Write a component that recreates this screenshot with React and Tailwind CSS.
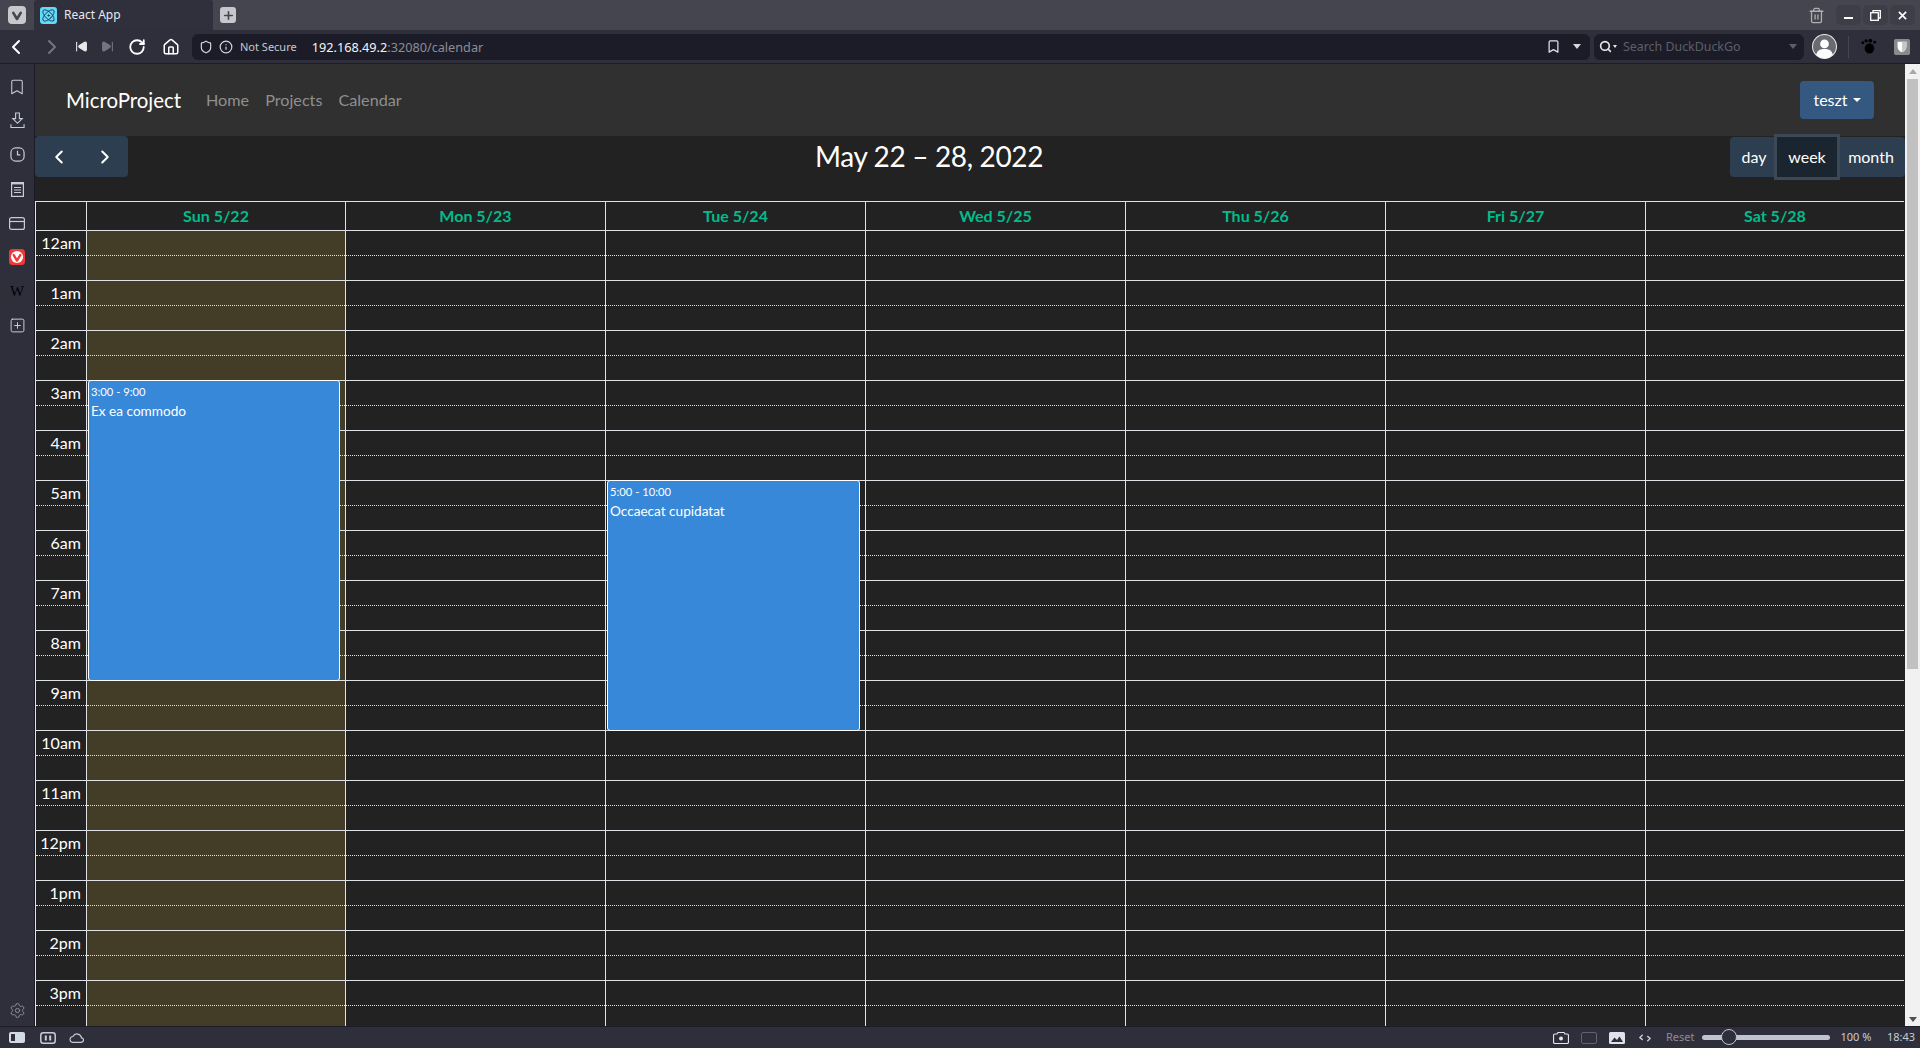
import React from 'react';
import { Atom, Plus, ChevronLeft, ChevronRight, SkipBack, SkipForward, RotateCw, Home, Shield, Info, Bookmark, Search, Trash2, Settings, SquarePlus } from 'lucide-react';

const days = ['Sun 5/22', 'Mon 5/23', 'Tue 5/24', 'Wed 5/25', 'Thu 5/26', 'Fri 5/27', 'Sat 5/28'];
const hours = ['12am', '1am', '2am', '3am', '4am', '5am', '6am', '7am', '8am', '9am', '10am', '11am', '12pm', '1pm', '2pm', '3pm'];

function VivaldiMark({ box, ring, mark }) {
  return (
    <svg viewBox="0 0 18 18" className="w-full h-full">
      <rect width="18" height="18" rx="4" fill={box} />
      <circle cx="9" cy="9" r="6.800" fill={ring} />
      <path d="M5.300 6.800 L9 13 L12.700 6.800" fill="none" stroke={mark} strokeWidth="2.600" strokeLinecap="round" strokeLinejoin="round" />
    </svg>
  );
}

function WindowButton({ children }) {
  return <div className="w-[25px] h-[20px] rounded-[5px] bg-[#3e3e48] flex items-center justify-center">{children}</div>;
}

function TabBar() {
  return (
    <div className="h-[30px] bg-[#45454f] flex items-stretch text-[#e8e8ec]">
      <div className="w-[34px] flex items-center justify-center">
        <div className="w-[18px] h-[18px]"><VivaldiMark box="#c8c8cc" ring="#c8c8cc" mark="#45454f" /></div>
      </div>
      <div className="w-[179px] bg-[#2f303c] rounded-t-[3px] flex items-center pl-[6px] text-[12px] font-['Noto_Sans',sans-serif]">
        <div className="w-[17px] h-[17px] bg-[#61dafb] rounded-[3px] flex items-center justify-center">
          <Atom size={15} color="#1f2a44" strokeWidth={1.500} />
        </div>
        <span className="ml-[7px]">React App</span>
      </div>
      <div className="ml-[7px] flex items-center">
        <div className="w-[16px] h-[16px] bg-[#c8c8cc] rounded-[3px] flex items-center justify-center">
          <Plus size={13} color="#45454f" strokeWidth={3} />
        </div>
      </div>
      <div className="ml-auto flex items-center gap-[2px] pr-[5px]">
        <Trash2 size={17} color="#b0b0b4" strokeWidth={1.800} className="mr-[9px]" />
        <WindowButton><div className="w-[9px] h-[2px] mt-[5px] bg-white" /></WindowButton>
        <WindowButton>
          <svg viewBox="0 0 11 11" className="w-[11px] h-[11px]" fill="none" stroke="#fff" strokeWidth="1.300">
            <rect x="0.700" y="2.700" width="7.600" height="7.600" />
            <path d="M3 2.500V0.700H10.300V8H8.500" />
          </svg>
        </WindowButton>
        <WindowButton>
          <svg viewBox="0 0 10 10" className="w-[9px] h-[9px]" stroke="#fff" strokeWidth="1.800"><path d="M1 1 9 9M9 1 1 9" /></svg>
        </WindowButton>
      </div>
    </div>
  );
}

function AddressBar() {
  return (
    <div className="h-[34px] bg-[#2e2f3b] border-b border-[#1c1c26] flex items-center text-white font-['Noto_Sans',sans-serif]">
      <ChevronLeft size={24} strokeWidth={2} className="ml-[4px]" />
      <ChevronRight size={24} strokeWidth={2} color="#75757f" className="ml-[12px]" />
      <SkipBack size={13} fill="#e8e8ec" strokeWidth={2} className="ml-[11px] text-[#e8e8ec]" />
      <SkipForward size={13} fill="#75757f" strokeWidth={2} color="#75757f" className="ml-[13px]" />
      <RotateCw size={18} strokeWidth={2.400} className="ml-[14px]" />
      <Home size={18} strokeWidth={2} className="ml-[16px]" />
      <div className="ml-[12px] w-[1398px] h-[26px] bg-[#1c1c28] rounded-[6px] flex items-center pl-[7px] pr-[9px]">
        <Shield size={14} color="#d8d8dc" />
        <Info size={14} color="#d8d8dc" className="ml-[6px]" />
        <span className="ml-[7px] pt-[2px] text-[11px] text-[#c8c8cc]">Not Secure</span>
        <span className="ml-[15px] pt-[2px] text-[12.700px] text-[#f4f4f6]">192.168.49.2<span className="text-[#8c8c96]">:32080/calendar</span></span>
        <Bookmark size={15} color="#e0e0e4" className="ml-auto mr-[12px]" />
        <div className="w-0 h-0 border-x-[4px] border-x-transparent border-t-[5px] border-t-[#d8d8dc]" />
      </div>
      <div className="ml-[4px] w-[210px] h-[26px] bg-[#1c1c28] rounded-[6px] flex items-center pl-[5px] pr-[7px]">
        <Search size={13} color="#e8e8ec" strokeWidth={3} />
        <div className="w-0 h-0 ml-[1px] border-x-[2.500px] border-x-transparent border-t-[3px] border-t-[#e8e8ec]" />
        <span className="ml-[6px] pt-[2px] text-[12.400px] text-[#5e5e68]">Search DuckDuckGo</span>
        <div className="ml-auto w-0 h-0 border-x-[4px] border-x-transparent border-t-[5px] border-t-[#5e5e68]" />
      </div>
      <svg viewBox="0 0 24 24" className="ml-[8px] w-[25px] h-[25px]">
        <circle cx="12" cy="12" r="11.500" fill="#6a6a70" stroke="#e8e8ec" strokeWidth="1" />
        <circle cx="12" cy="9.500" r="4.200" fill="#fff" />
        <path d="M4 20c1-4.500 4.500-5.500 8-5.500s7 1 8 5.500A11 11 0 0 1 4 20z" fill="#fff" />
      </svg>
      <div className="ml-[11px] w-px h-[22px] bg-[#45454f]" />
      <svg viewBox="0 0 18 18" className="ml-[11px] w-[17px] h-[17px]">
        <ellipse cx="10" cy="11" rx="5" ry="5.500" fill="#000" />
        <circle cx="3" cy="5" r="1.500" fill="#000" />
        <circle cx="6.500" cy="3" r="1.800" fill="#000" />
        <circle cx="11" cy="2.800" r="2" fill="#000" />
        <circle cx="15.500" cy="4.500" r="1.500" fill="#000" />
      </svg>
      <svg viewBox="0 0 18 18" className="ml-[17px] w-[16px] h-[16px]">
        <rect width="18" height="18" rx="2" fill="#8a8a8a" />
        <path d="M4 3h10v6c0 3-2.500 5-5 6-2.500-1-5-3-5-6z" fill="#fff" />
        <path d="M9 3h5v6c0 3-2.500 5-5 6z" fill="#c8c8c8" />
      </svg>
    </div>
  );
}

function SideItem({ children }) {
  return <div className="h-[34.200px] pt-[14px] flex justify-center shrink-0"><div className="h-[17px] flex items-center">{children}</div></div>;
}

function SideBar() {
  const stroke = '#c8ccd4';
  return (
    <div className="w-[35px] shrink-0 bg-[#2e2f3b] border-r border-[#1c1c26] flex flex-col items-center">
      <SideItem><Bookmark size={18} strokeWidth={1.400} color={stroke} /></SideItem>
      <SideItem>
        <svg viewBox="0 0 16 18" className="w-[15px] h-[17px]" fill="none" stroke={stroke} strokeWidth="1.200">
          <path d="M6 1h4v6h3l-5 5-5-5h3z" />
          <path d="M1 13v3.500h14V13" />
        </svg>
      </SideItem>
      <SideItem>
        <svg viewBox="0 0 16 16" className="w-[15px] h-[15px]" fill="none" stroke={stroke} strokeWidth="1.300">
          <rect x="1" y="1" width="14" height="14" rx="5" />
          <path d="M8 4v4.500H11" />
        </svg>
      </SideItem>
      <SideItem>
        <svg viewBox="0 0 13 15" className="w-[13px] h-[15px]" fill="none" stroke={stroke} strokeWidth="1.200">
          <rect x="0.600" y="0.600" width="11.800" height="13.800" />
          <path d="M0.600 1.500h11.800" strokeWidth="1.800" />
          <path d="M3 5.500h7M3 8h7M3 10.500h7" />
        </svg>
      </SideItem>
      <SideItem>
        <svg viewBox="0 0 16 13" className="w-[16px] h-[13px]" fill="none" stroke={stroke} strokeWidth="1.200">
          <rect x="0.600" y="0.600" width="14.800" height="11.800" rx="2" />
          <path d="M0.600 4.500h14.800" />
        </svg>
      </SideItem>
      <SideItem><div className="w-[16px] h-[16px]"><VivaldiMark box="#ef3939" ring="#fff" mark="#ef3939" /></div></SideItem>
      <SideItem><span className="text-[15px] leading-[17px] text-black font-['Liberation_Serif',serif]">W</span></SideItem>
      <SideItem><SquarePlus size={17} strokeWidth={1.400} color={stroke} /></SideItem>
      <Settings size={17} strokeWidth={1.400} color="#8f8f99" className="mt-auto mb-[7px]" />
    </div>
  );
}

function EventCard({ top, height, time, title }) {
  return (
    <div style={{ top, height }} className="absolute left-[1px] right-[5px] z-10 bg-[#3788d8] border border-white rounded-[3px] pl-[2px] pt-[1px] text-white">
      <div className="text-[11.200px] leading-[17px] mt-[1px]">{time}</div>
      <div className="text-[13.600px] leading-[20px] mt-[1px]">{title}</div>
    </div>
  );
}

function TimeGrid() {
  return (
    <div className="border-l border-[#dee2e6] w-[1869px] text-white">
      <div className="grid grid-cols-[50px_259px_repeat(5,260px)_1fr] h-[30px] border-y border-[#dee2e6]">
        <div />
        {days.map((d) => (
          <div key={d} className="border-l border-[#dee2e6] flex items-center justify-center text-[16px] font-bold text-[#00bc8c]">{d}</div>
        ))}
      </div>
      <div className="grid grid-cols-[50px_259px_repeat(5,260px)_1fr]">
        <div>
          {hours.map((h, i) => (
            <div key={h} className={i ? 'h-[50px] border-t border-[#dee2e6]' : 'h-[49px]'}>
              <div className="h-[25px] border-b border-dotted border-[#dee2e6] text-right pr-[5px] text-[16px] leading-[24px]">{h}</div>
            </div>
          ))}
        </div>
        {days.map((d, col) => (
          <div key={d} className={`relative border-l border-[#dee2e6] ${col === 0 ? 'bg-[#433d27]' : ''}`}>
            {hours.map((h, i) => (
              <div key={h} className={i ? 'h-[50px] border-t border-[#dee2e6]' : 'h-[49px]'}>
                <div className="h-[25px] border-b border-dotted border-[#dee2e6]" />
              </div>
            ))}
            {col === 0 && <EventCard top={149} height={301} time="3:00 - 9:00" title="Ex ea commodo" />}
            {col === 2 && <EventCard top={249} height={251} time="5:00 - 10:00" title="Occaecat cupidatat" />}
          </div>
        ))}
      </div>
    </div>
  );
}

function Page() {
  return (
    <div className="flex-1 min-w-0 bg-[#222222] overflow-hidden font-['Lato',sans-serif]">
      <nav className="h-[72px] bg-[#303030] flex items-center px-[31px]">
        <span className="text-[20.400px] text-white">MicroProject</span>
        <div className="ml-[25px] flex gap-[16px] text-[16.200px] text-[#8f8f8f]">
          <span>Home</span>
          <span>Projects</span>
          <span>Calendar</span>
        </div>
        <button className="ml-auto h-[38px] w-[74px] rounded-[4px] bg-[#34587f] text-white text-[16px] flex items-center justify-center gap-[5px]">
          teszt
          <span className="w-0 h-0 border-x-[4.800px] border-x-transparent border-t-[4.800px] border-t-white" />
        </button>
      </nav>
      <div className="h-[65px] flex justify-between items-start">
        <div className="flex h-[41px] w-[93px] bg-[#2c3e50] rounded-[4px] text-white">
          <div className="w-[47px] flex items-center justify-center"><ChevronLeft size={22} strokeWidth={2.200} /></div>
          <div className="w-[46px] flex items-center justify-center"><ChevronRight size={22} strokeWidth={2.200} /></div>
        </div>
        <h2 className="text-[28px] leading-[41px] tracking-[-0.350px] text-white">May 22 – 28, 2022</h2>
        <div className="flex h-[40px] mt-[1px] bg-[#2c3e50] rounded-[4px] text-white text-[16px] leading-[40px] text-center">
          <div className="w-[47px] pl-[1px]">day</div>
          <div className="w-[60px] bg-[#1a252f] ring-3 ring-[#3c4856]">week</div>
          <div className="w-[68px]">month</div>
        </div>
      </div>
      <TimeGrid />
    </div>
  );
}

function ScrollTrack() {
  return (
    <div className="w-[15px] shrink-0 bg-[#f1f1f1] flex flex-col items-center">
      <div className="mt-[5px] w-0 h-0 border-x-[4px] border-x-transparent border-b-[5px] border-b-[#a8a8a8]" />
      <div className="mt-[5px] w-[11px] h-[590px] bg-[#c1c1c1]" />
      <div className="mt-auto mb-[4px] w-0 h-0 border-x-[4px] border-x-transparent border-t-[5px] border-t-[#505050]" />
    </div>
  );
}

function StatusBar() {
  const light = '#c8ccd4';
  return (
    <div className="h-[22px] bg-[#2e2f3b] border-t border-[#1c1c26] flex items-center text-[#c8ccd4] text-[11px] font-['Noto_Sans',sans-serif]">
      <div className="ml-[9px] w-[16px] h-[11px] rounded-[2px] bg-[#d4dae4] flex">
        <div className="ml-[2px] mt-[2px] w-[4px] h-[7px] bg-[#2e2f3b]" />
      </div>
      <svg viewBox="0 0 16 12" className="ml-[15px] w-[16px] h-[12px]" fill="none" stroke={light} strokeWidth="1.500">
        <rect x="0.800" y="0.800" width="14.400" height="10.400" rx="2.500" />
        <path d="M5.800 3.500v5M10.200 3.500v5" strokeWidth="2" />
      </svg>
      <svg viewBox="0 0 16 10" className="ml-[12px] w-[16px] h-[10px]" fill="none" stroke={light} strokeWidth="1.200">
        <path d="M4 9.300h9a2.200 2.200 0 0 0 .500-4.400A4.500 4.500 0 0 0 5 3.500a3 3 0 0 0-1 5.800z" />
      </svg>
      <svg viewBox="0 0 16 13" className="ml-auto w-[16px] h-[13px]">
        <path d="M5 1.500h6l1 1.500h2a1.500 1.500 0 0 1 1.500 1.500v6.500a1.500 1.500 0 0 1-1.500 1.500H2A1.500 1.500 0 0 1 .500 11V4.500A1.500 1.500 0 0 1 2 3h2z" fill="none" stroke="#e4e6ea" strokeWidth="1.200" />
        <circle cx="8" cy="7.500" r="2" fill="#e4e6ea" />
      </svg>
      <div className="ml-[12px] w-[16px] h-[12px] rounded-[2px] border-[1.500px] border-[#62626c]" />
      <svg viewBox="0 0 16 12" className="ml-[12px] w-[16px] h-[12px]">
        <rect width="16" height="12" rx="1.500" fill="#dfe2e8" />
        <path d="M2 10 5.500 5.500 8 8l2.500-3.500L14 10z" fill="#2e2f3b" />
      </svg>
      <svg viewBox="0 0 13 10" className="ml-[14px] w-[12px] h-[10px]" fill="none" stroke={light} strokeWidth="1.500">
        <path d="M4 1.500 1 4.500l3 2.500M9 3l3 2.500L9 8.500" />
      </svg>
      <span className="ml-[15px] text-[#8c8c96]">Reset</span>
      <div className="relative ml-[8px] w-[128px] h-[5px] rounded-full bg-[#c0c4cc]">
        <div className="absolute left-[19px] -top-[6px] w-[16px] h-[16px] rounded-full bg-[#2e2f3b] border-[1.500px] border-[#c0c4cc]" />
      </div>
      <span className="ml-[10px]">100 %</span>
      <span className="ml-[15.500px] mr-[5px]">18:43</span>
    </div>
  );
}

export default function App() {
  return (
    <div className="w-[1920px] h-[1048px] flex flex-col overflow-hidden">
      <TabBar />
      <AddressBar />
      <div className="flex-1 min-h-0 flex">
        <SideBar />
        <Page />
        <ScrollTrack />
      </div>
      <StatusBar />
    </div>
  );
}
